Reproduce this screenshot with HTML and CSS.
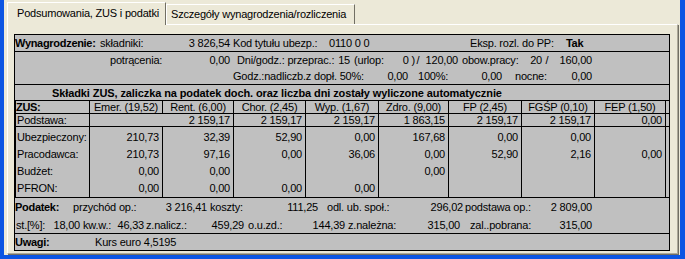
FILE: index.html
```html
<!DOCTYPE html>
<html lang="pl">
<head>
  <meta charset="UTF-8" />
  <title>Podsumowania, ZUS i podatki</title>
  <link rel="stylesheet" href="styles.css">
</head>
<body>
  <div class="window">
    <div class="tabs">
      <div class="tab active t1">Podsumowania, ZUS i podatki</div>
      <div class="tab t2">Szczegóły wynagrodzenia/rozliczenia</div>
    </div>

    <div class="page">
      <div class="sheet">

        <!-- Wynagrodzenie -->
        <div class="sec s-wyn1">
          <div class="row r1">
            <span class="b">Wynagrodzenie:</span>
            <span>składniki:</span>
            <span class="n">3 826,54</span>
            <span class="p3">Kod tytułu ubezp.:</span>
            <span class="p1">0110 0 0</span>
            <span>Eksp. rozl. do PP:</span>
            <span class="b">Tak</span>
          </div>
        </div>
        <div class="sec s-wyn2">
          <div class="row r2">
            <span class="p95">potrącenia:</span>
            <span class="n">0,00</span>
            <span class="p7">Dni/godz.: przeprac.:</span>
            <span class="n">15</span>
            <span class="p4">(urlop:</span>
            <span class="n">0 )</span>
            <span class="c">/</span>
            <span class="n">120,00</span>
            <span class="p4">obow.pracy:</span>
            <span class="n">20</span>
            <span class="c">/</span>
            <span class="n">160,00</span>
          </div>
          <div class="row r3">
            <span class="p218">Godz.:nadliczb.z dopł. 50%:</span>
            <span class="n">0,00</span>
            <span class="p10">100%:</span>
            <span class="n">0,00</span>
            <span class="p13">nocne:</span>
            <span class="n">0,00</span>
          </div>
        </div>

        <div class="sec s-head">Składki ZUS, zaliczka na podatek doch. oraz liczba dni zostały wyliczone automatycznie</div>

        <!-- ZUS -->
        <div class="zus">
          <div class="tr th">
            <div class="lab b">ZUS:</div>
            <div>Emer. (19,52)</div>
            <div>Rent. (6,00)</div>
            <div>Chor. (2,45)</div>
            <div>Wyp. (1,67)</div>
            <div>Zdro. (9,00)</div>
            <div>FP (2,45)</div>
            <div>FGŚP (0,10)</div>
            <div>FEP (1,50)</div>
            <div class="fill"></div>
          </div>
          <div class="tr tb">
            <div class="lab">Podstawa:</div>
            <div class="span2">2 159,17</div>
            <div>2 159,17</div>
            <div>2 159,17</div>
            <div>1 863,15</div>
            <div>2 159,17</div>
            <div>2 159,17</div>
            <div>0,00</div>
            <div class="fill"></div>
          </div>
          <div class="tr td first">
            <div class="lab">Ubezpieczony:</div>
            <div>210,73</div>
            <div>32,39</div>
            <div>52,90</div>
            <div>0,00</div>
            <div>167,68</div>
            <div>0,00</div>
            <div>0,00</div>
            <div></div>
            <div class="fill"></div>
          </div>
          <div class="tr td">
            <div class="lab">Pracodawca:</div>
            <div>210,73</div>
            <div>97,16</div>
            <div>0,00</div>
            <div>36,06</div>
            <div>0,00</div>
            <div>52,90</div>
            <div>2,16</div>
            <div>0,00</div>
            <div class="fill"></div>
          </div>
          <div class="tr td">
            <div class="lab">Budżet:</div>
            <div>0,00</div>
            <div>0,00</div>
            <div></div>
            <div></div>
            <div>0,00</div>
            <div></div>
            <div></div>
            <div></div>
            <div class="fill"></div>
          </div>
          <div class="tr td">
            <div class="lab">PFRON:</div>
            <div>0,00</div>
            <div>0,00</div>
            <div>0,00</div>
            <div>0,00</div>
            <div></div>
            <div></div>
            <div></div>
            <div></div>
            <div class="fill"></div>
          </div>
        </div>

        <!-- Podatek -->
        <div class="sec s-pod">
          <div class="row r4">
            <span class="b">Podatek:</span>
            <span class="p1">przychód op.:</span>
            <span class="n">3 216,41</span>
            <span class="p3">koszty:</span>
            <span class="n">111,25</span>
            <span class="p9">odl. ub. społ.:</span>
            <span class="n">296,02</span>
            <span class="p2">podstawa op.:</span>
            <span class="n">2 809,00</span>
          </div>
          <div class="row r5">
            <span class="p1">st.[%]:</span>
            <span class="n">18,00</span>
            <span class="p3">kw.w.:</span>
            <span class="n">46,33</span>
            <span class="p2">z.nalicz.:</span>
            <span class="n">459,29</span>
            <span class="p4">o.u.zd.:</span>
            <span class="n">144,39</span>
            <span class="p3">z.należna:</span>
            <span class="n">315,00</span>
            <span class="p10">zal..pobrana:</span>
            <span class="n">315,00</span>
          </div>
        </div>

        <div class="sec s-uwagi">
          <div class="row r6">
            <span class="b">Uwagi:</span>
            <span>Kurs euro 4,5195</span>
          </div>
        </div>

      </div>
    </div>
  </div>
</body>
</html>
```

FILE: styles.css
```css
* {
  box-sizing: border-box;
}

body {
  margin: 0;
  width: 685px;
  height: 259px;
  overflow: hidden;
  background: #0c55e3;
  font-family: "Liberation Sans", Arial, sans-serif;
  font-size: 11px;
  letter-spacing: -0.2px;
  color: #000;
}

.window {
  margin: 0 5px 0 4px;
  height: 255px;
  padding-left: 3px;
  background: #ece9d8;
  display: flex;
  flex-direction: column;
}

/* Zakladki */
.tabs {
  display: flex;
  align-items: flex-end;
  height: 25px;
  margin-bottom: -1px;
  position: relative;
  z-index: 1;
}

.tab {
  height: 20px;
  margin-bottom: 1px;
  border: 1px solid #fff;
  border-bottom: none;
  border-right: 1px solid #716f64;
  background: #ece9d8;
  line-height: 19px;
  white-space: nowrap;
}

.tab.active {
  height: 23px;
  margin-bottom: 0;
  line-height: 20px;
}

.t1 {
  width: 159px;
  padding-left: 9px;
}

.t2 {
  width: 189px;
  padding-left: 4px;
}

.page {
  flex: 1;
  margin: 0 2px 1px 0;
  padding: 9px 0 0 6px;
  border: 1px solid;
  border-color: #fff #aca899 #aca899 #fff;
  box-shadow: 1px 1px 0 #716f64;
}

/* Szary arkusz */
.sheet {
  width: 656px;
  height: 217px;
  background: #c0c0c0;
  border: 1px solid #000;
}

.sec {
  border-bottom: 1px solid #000;
}

.s-wyn1 {
  height: 17px;
}

.s-wyn2 {
  height: 33px;
}

.s-head {
  height: 16px;
  padding-left: 37px;
  font-weight: bold;
  letter-spacing: -0.1px;
  line-height: 16px;
  white-space: nowrap;
}

.s-pod {
  height: 37px;
  border-top: 1px solid #000;
  padding-top: 1px;
}

.s-uwagi {
  height: 16px;
  border-bottom: none;
}

.row {
  display: grid;
  height: 16px;
  line-height: 16px;
  white-space: nowrap;
}

.r1 { grid-template-columns: 85px 55px 75px 98px 142px 96px auto; }
.r2 { grid-template-columns: 140px 75px 105px 15px 45px 20px 6px 37px 69px 15px 10px 40px; }
.r3 { grid-template-columns: 353px 40px 44px 50px 50px 40px; }
.r4 { grid-template-columns: 57px 78px 57px 53px 58px 82px 63px 72px 57px; height: 18px; line-height: 17px; }
.r5 { grid-template-columns: 35px 30px 34px 30px 46px 54px 51px 50px 55px 60px 75px 57px; height: 17px; line-height: 17px; }
.r6 { grid-template-columns: 80px auto; }

.b {
  font-weight: bold;
  letter-spacing: -0.3px;
}
.n { text-align: right; }
.c { text-align: center; }

.p1 { padding-left: 1px; }
.p2 { padding-left: 2px; }
.p3 { padding-left: 3px; }
.p4 { padding-left: 4px; }
.p7 { padding-left: 7px; }
.p9 { padding-left: 9px; }
.p10 { padding-left: 10px; }
.p13 { padding-left: 13px; }
.p95 { padding-left: 95px; }
.p218 { padding-left: 218px; }

/* Tabela ZUS */
.zus {
  display: grid;
  grid-template-columns: 75px 73px 71px 72px 73px 70px 73px 73px 71px 3px;
  grid-template-rows: 13px 13px 19px 17px 17px 17px;
}

.tr {
  display: contents;
}

.tr > div {
  border-right: 1px solid #000;
  padding: 0 3px 0 0;
  text-align: right;
  white-space: nowrap;
}

.tr > .lab {
  text-align: left;
  padding-left: 2px;
  box-shadow: inset 1px 0 0 #000;
}

.tr > .fill {
  border-right: none;
  padding: 0;
}

.th > div,
.tb > div {
  border-bottom: 1px solid #000;
  line-height: 12px;
}

.th > div {
  text-align: center;
  padding: 0;
}

.th > .lab {
  padding-left: 1px;
}

.span2 {
  grid-column: span 2;
}

.td > div {
  line-height: 17px;
}

.td.first > div {
  padding-top: 2px;
}
```
